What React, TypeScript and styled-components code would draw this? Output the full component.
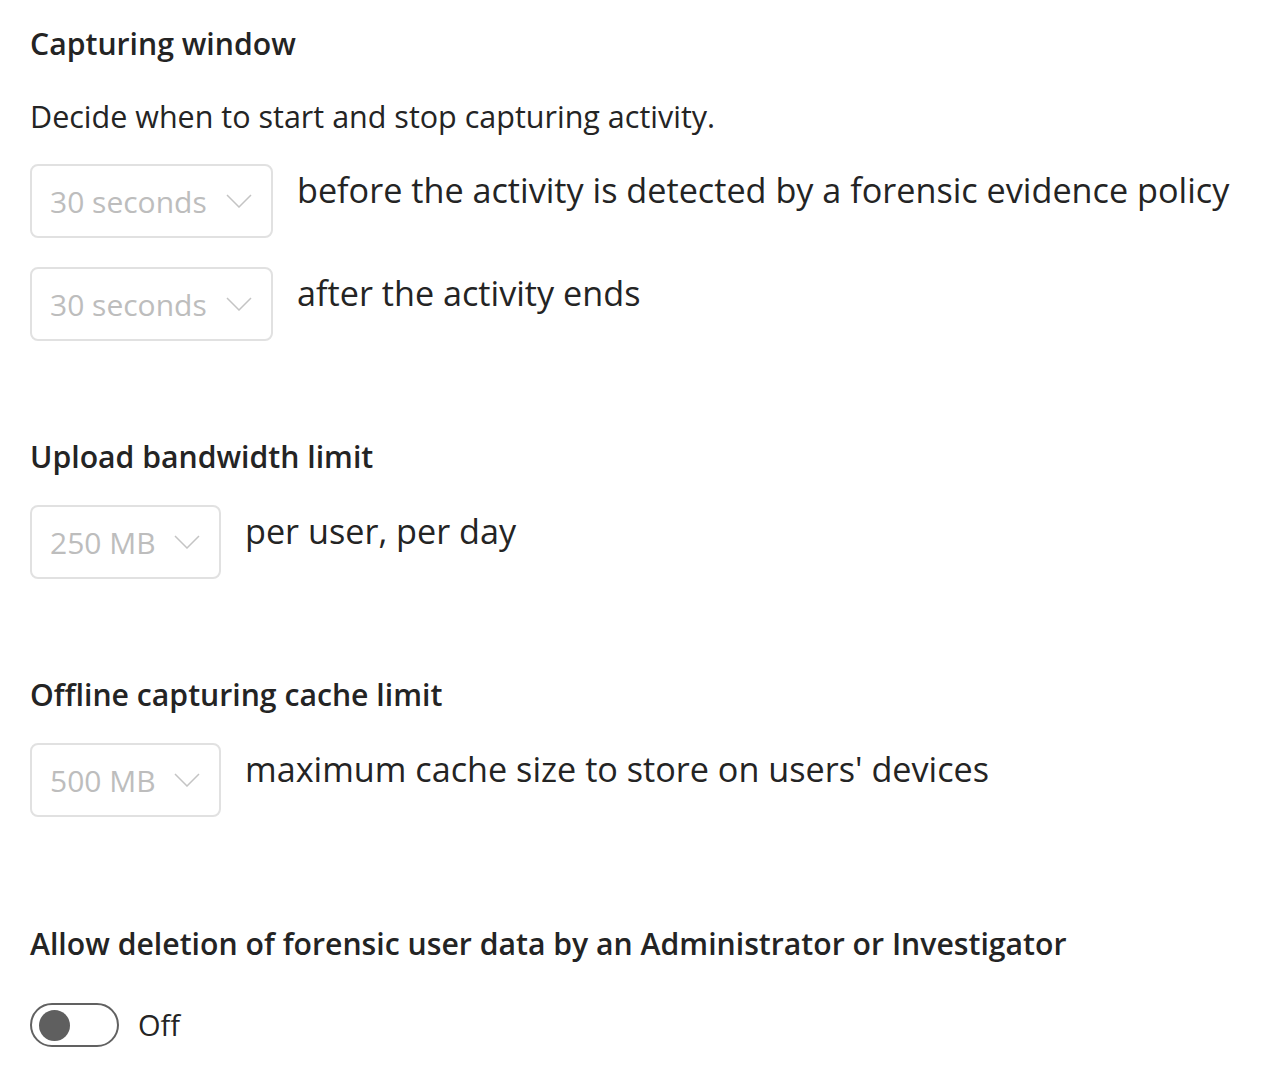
import * as React from 'react'
import styled, { createGlobalStyle } from 'styled-components'

const GlobalStyle = createGlobalStyle`
  body {
    margin: 0;
    background: #ffffff;
    font-family: "Open Sans", "Noto Sans", sans-serif;
    color: #242424;
  }
`

const Page = styled.div`
  padding: 24px 30px;
  display: flex;
  flex-direction: column;
`

const Section = styled.section<{ $top?: number }>`
  display: flex;
  flex-direction: column;
  gap: 28px;
  margin-top: ${p => p.$top || 0}px;
`

const Heading = styled.h2`
  margin: 0;
  font-size: 30.2px;
  line-height: 40px;
  font-weight: 600;
  color: #242424;
`

const Description = styled.p`
  margin: 32px 0 0;
  font-size: 30.5px;
  line-height: 40px;
`

const Rows = styled.div`
  display: flex;
  flex-direction: column;
  gap: 29px;
`

const Row = styled.div`
  display: flex;
  align-items: flex-start;
`

const Dropdown = styled.div<{ $width: number }>`
  box-sizing: border-box;
  width: ${p => p.$width}px;
  height: 74px;
  flex-shrink: 0;
  border: 2px solid #e1e1e1;
  border-radius: 8px;
  padding: 0 19px 0 18px;
  display: flex;
  align-items: center;
  justify-content: space-between;
  color: #bdbdbd;
  font-size: 30px;
`

const Label = styled.span`
  margin-left: 24px;
  font-size: 34.2px;
  line-height: 52px;
  white-space: nowrap;
`

const ToggleRow = styled.div`
  display: flex;
  align-items: center;
  gap: 19px;
  margin-top: 11px;
`

const Track = styled.div`
  box-sizing: border-box;
  width: 89px;
  height: 44px;
  border: 2px solid #616161;
  border-radius: 22px;
  display: flex;
  align-items: center;
  padding-left: 7px;
`

const Knob = styled.div`
  width: 31px;
  height: 31px;
  border-radius: 50%;
  background: #5f5f5f;
`

const ToggleText = styled.span`
  font-size: 29px;
  line-height: 44px;
`

const Chevron = () => (
  <svg width="26" height="14" viewBox="0 0 26 14" fill="none">
    <path d="M1 1 L13 13 L25 1" stroke="#c4c4c4" strokeWidth="1.5" />
  </svg>
)

const Select = ({ value, width }: { value: string; width: number }) => (
  <Dropdown $width={width}>
    <span>{value}</span>
    <Chevron />
  </Dropdown>
)

export default function App() {
  return (
    <Page>
      <GlobalStyle />
      <Section>
        <div>
          <Heading>Capturing window</Heading>
          <Description>Decide when to start and stop capturing activity.</Description>
        </div>
        <Rows>
          <Row>
            <Select value="30 seconds" width={243} />
            <Label>before the activity is detected by a forensic evidence policy</Label>
          </Row>
          <Row>
            <Select value="30 seconds" width={243} />
            <Label>after the activity ends</Label>
          </Row>
        </Rows>
      </Section>
      <Section $top={96}>
        <Heading>Upload bandwidth limit</Heading>
        <Row>
          <Select value="250 MB" width={191} />
          <Label>per user, per day</Label>
        </Row>
      </Section>
      <Section $top={96}>
        <Heading>Offline capturing cache limit</Heading>
        <Row>
          <Select value="500 MB" width={191} />
          <Label>maximum cache size to store on users' devices</Label>
        </Row>
      </Section>
      <Section $top={107}>
        <Heading>Allow deletion of forensic user data by an Administrator or Investigator</Heading>
        <ToggleRow>
          <Track>
            <Knob />
          </Track>
          <ToggleText>Off</ToggleText>
        </ToggleRow>
      </Section>
    </Page>
  )
}
